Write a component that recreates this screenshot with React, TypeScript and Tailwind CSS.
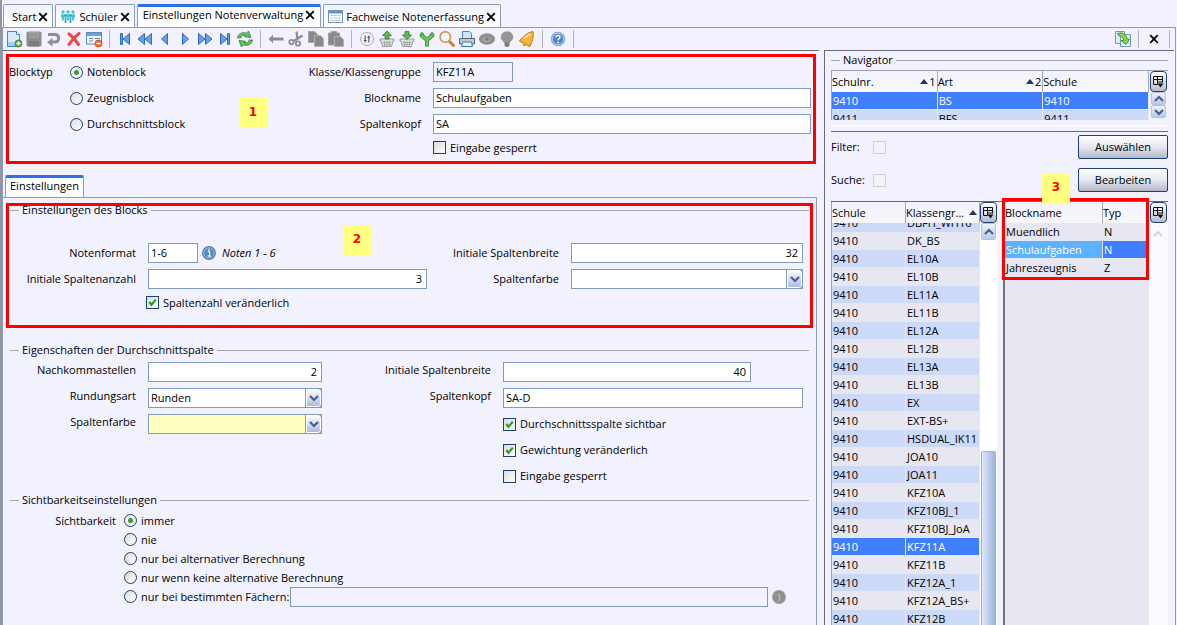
import React, { useState } from 'react';

type IconProps = { children: React.ReactNode; size?: number };

const Svg: React.FC<IconProps> = ({ children, size = 18 }) => (
  <svg width={size} height={size} viewBox="0 0 18 18" fill="none" className="shrink-0">
    {children}
  </svg>
);

/* ---------- Toolbar icons ---------- */

const NewIcon = () => (
  <Svg>
    <path d="M2.5 1.5h9l3 3v12h-12z" fill="#d9ebfb" stroke="#4d86bd" />
    <path d="M3 12h11v4H3z" fill="#9fd0f7" />
    <path d="M11.5 1.5v3h3" fill="#fff" stroke="#4d86bd" />
    <circle cx="13.5" cy="13.5" r="3.5" fill="#6aa84a" stroke="#3f7a2c" strokeWidth=".8" />
    <path d="M13.5 11.5v4M11.5 13.5h4" stroke="#fff" strokeWidth="1.4" />
  </Svg>
);

const SaveIcon = () => (
  <Svg>
    <path d="M1.5 3q0-1.500 1.500-1.500h12q1.500 0 1.500 1.500v12q0 1.500-1.500 1.500h-12q-1.500 0-1.500-1.500z" fill="#8c8c8c" />
    <path d="M4 2h10v6H4z" fill="#a3a3a3" />
    <path d="M4 11h10v5.500H4z" fill="#7c7c7c" />
    <path d="M5 4h8M5 6h8" stroke="#8c8c8c" />
  </Svg>
);

const UndoIcon = () => (
  <Svg>
    <path d="M3 4.500h7.500a3.800 3.800 0 0 1 0 7.500H7" stroke="#8f8f8f" strokeWidth="3" />
    <path d="M7.500 8v8.500L2 12.200z" fill="#8f8f8f" />
  </Svg>
);

const DeleteIcon = () => (
  <Svg>
    <path d="M4 4c3.500 2.500 6.500 6 9.500 10.500M14 3.500c-4 3-7.500 7-10 11" stroke="#ee4a49" strokeWidth="3.200" strokeLinecap="round" />
  </Svg>
);

const FormIcon = () => (
  <Svg>
    <rect x="1.500" y="2.500" width="15" height="11.500" fill="#f4f9ff" stroke="#5b8cc0" />
    <path d="M2 3h14v3H2z" fill="#6fa3d8" />
    <path d="M4 8.500h4M4 11h4M10 8.500h5" stroke="#5b8cc0" />
    <circle cx="13.500" cy="13.500" r="3.500" fill="#e8752d" stroke="#b9501a" strokeWidth=".8" />
    <path d="M11.500 13.500h4" stroke="#fff" strokeWidth="1.400" />
  </Svg>
);

const blue = { fill: '#6a9fe6', stroke: '#2f6cc0', strokeWidth: 1 };

const FirstIcon = () => (
  <Svg><path d="M4.500 3.500h2v11h-2zM13.500 3.500v11L7 9z" {...blue} /></Svg>
);
const RewindIcon = () => (
  <Svg><path d="M8.500 3.500v11L2 9zM15.500 3.500v11L9 9z" {...blue} /></Svg>
);
const PrevIcon = () => (
  <Svg><path d="M11.500 3.500v11L5.500 9z" {...blue} /></Svg>
);
const NextIcon = () => (
  <Svg><path d="M6.500 3.500v11L12.500 9z" {...blue} /></Svg>
);
const ForwardIcon = () => (
  <Svg><path d="M2.500 3.500v11L9 9zM9.500 3.500v11L16 9z" {...blue} /></Svg>
);
const LastIcon = () => (
  <Svg><path d="M11.500 3.500h2v11h-2zM4.500 3.500v11L11 9z" {...blue} /></Svg>
);

const RefreshIcon = () => (
  <Svg>
    <path d="M1.500 8C2 4 6 1.500 10.500 3.200L12.500 1l2.500 6.500-6.500-.8 1.500-1.300C7 4.800 5 5.800 4.800 8z" fill="#6dbb62" stroke="#2f7d3a" strokeWidth=".8" />
    <path d="M16.500 10C16 14 12 16.500 7.500 14.800L5.500 17 3 10.500l6.500.8L8 12.600c3 .6 5-.4 5.200-2.600z" fill="#6dbb62" stroke="#2f7d3a" strokeWidth=".8" />
  </Svg>
);

const BackIcon = () => (
  <Svg><path d="M1.500 9 6 4.800v2.700h10.500v3H6v2.700z" fill="#8d8d8d" /></Svg>
);

const CutIcon = () => (
  <Svg>
    <path d="M9.500 1.500 10.500 10M15.500 5.500 6 11.500" stroke="#8d8d8d" strokeWidth="2.200" />
    <circle cx="4.500" cy="12" r="2.200" stroke="#8d8d8d" strokeWidth="1.800" />
    <circle cx="11" cy="13.500" r="2.200" stroke="#8d8d8d" strokeWidth="1.800" />
  </Svg>
);

const CopyIcon = () => (
  <Svg>
    <path d="M1.500 1.500h6l3 3v8h-9z" fill="#8a8a8a" stroke="#a5a5a5" />
    <path d="M7.500 5.500h6l3 3v8h-9z" fill="#8a8a8a" stroke="#b5b5b5" />
  </Svg>
);

const PasteIcon = () => (
  <Svg>
    <path d="M1.500 3h3V1.500h5V3h3v12h-11z" fill="#8a8a8a" stroke="#9f9f9f" />
    <path d="M7.500 6.500h6l3 3v7h-9z" fill="#8a8a8a" stroke="#b5b5b5" />
  </Svg>
);

const SettingsIcon = () => (
  <Svg>
    <circle cx="9" cy="9" r="6.500" fill="#f5f5f5" stroke="#a9a9a9" />
    <path d="M7.200 5.500v7M5.700 10.500h3M10.800 5.500v7M9.300 7.500h3" stroke="#5d5d5d" strokeWidth="1.200" />
  </Svg>
);

const Basket: React.FC<{ up?: boolean }> = ({ up }) => (
  <Svg>
    <path d="M2 9h14v2h-1l-1.500 5.500h-9L3 11H2z" fill="#dedede" stroke="#8a8a8a" strokeWidth=".8" />
    <path d="M5 12.500h8M5.500 14.500h7M6.500 11v5M9 11v5M11.500 11v5" stroke="#999" strokeWidth=".7" />
    <path
      d={up ? 'M9 1 13.500 5.500H11V9H7V5.500H4.500z' : 'M9 9.500 4.500 5H7V1.500h4V5h2.500z'}
      fill="#5db84e"
      stroke="#2c7a2b"
      strokeWidth=".8"
    />
  </Svg>
);

const MergeIcon = () => (
  <Svg>
    <path d="M4 3.500v2.200L8 9h2l4-3.300V3.500M9 9v7.500" stroke="#318235" strokeWidth="4" />
    <path d="M4 4v1.700L8 9h2l4-3.300V4M9 9v7" stroke="#70c665" strokeWidth="2.600" />
    <path d="M1 5.500 4 1.500l3 4zM11 5.500l3-4 3 4z" fill="#4da94b" />
  </Svg>
);

const SearchIcon = () => (
  <Svg>
    <path d="m11 11 4.500 4.500" stroke="#c9822f" strokeWidth="3" strokeLinecap="round" />
    <circle cx="7.300" cy="7" r="5.300" fill="#eef5fb" stroke="#d28c49" strokeWidth="1.500" />
  </Svg>
);

const PrintIcon = () => (
  <Svg>
    <path d="M4.500 1.500h7l2 2V9h-9z" fill="#cfe3f8" stroke="#4f83bb" />
    <path d="M1.500 8.500h15V14h-15z" fill="#c3c6cc" stroke="#5c6675" />
    <path d="M4.500 12h9l1 4.500h-11z" fill="#e9f3fd" stroke="#3d78b8" />
  </Svg>
);

const EyeIcon = () => (
  <Svg>
    <ellipse cx="9" cy="9" rx="8" ry="5.800" fill="#8e8e8e" />
    <ellipse cx="9" cy="9.500" rx="4.500" ry="3" fill="#a2a2a2" />
    <circle cx="9" cy="9" r="1.800" fill="#7d7d7d" />
  </Svg>
);

const BulbIcon = () => (
  <Svg>
    <path d="M9 1.200A6.300 6.300 0 0 1 15.300 7.500c0 2.200-2.500 3.500-3.300 5H6c-.8-1.500-3.300-2.800-3.300-5A6.300 6.300 0 0 1 9 1.200z" fill="#969696" />
    <path d="M6.500 12h5v3.500l-1.500 1.500H8l-1.500-1.500z" fill="#7f7f7f" />
  </Svg>
);

const BellIcon = () => (
  <Svg>
    <path d="M15 1.500c-5 .8-8.500 4-12 7.500l-1.500 2L12 16.500c1.800-4.500 4-9 3-15z" fill="#f3b73e" stroke="#bd7a18" />
    <path d="M1.500 10.800 12 16.300" stroke="#d9952b" strokeWidth="1.500" />
    <circle cx="6.500" cy="14.500" r="1.800" fill="#e19a2a" />
    <path d="M6 8.500c2-2 4-3.500 6.500-4.500" stroke="#fbe2a0" strokeWidth="1.400" />
  </Svg>
);

const HelpIcon = () => (
  <Svg>
    <circle cx="9" cy="9" r="6.800" fill="#4f86c9" stroke="#8fa9cc" />
    <circle cx="9" cy="9" r="5.700" stroke="#d5e3f5" strokeWidth=".8" />
    <path d="M7 7.300c0-2.600 4.200-2.500 4 0-.1 1.500-2 1.500-2 3" stroke="#fff" strokeWidth="1.400" />
    <circle cx="9" cy="12.400" r=".9" fill="#fff" />
  </Svg>
);

const ExportIcon = () => (
  <Svg>
    <path d="M1.500 1.500h9v12h-9z" fill="#d9eaf9" stroke="#6d9bc6" />
    <path d="M6.500 4.500h10v12h-10z" fill="#e8f3fd" stroke="#6d9bc6" />
    <path d="M3.500 3.500C8 2 12.500 4 13 9h2.500L12 14.500 7 10.500h2.500C9.500 8 7.500 6 5 6z" fill="#8bd443" stroke="#468c22" strokeWidth=".9" />
  </Svg>
);

const PeopleIcon = () => (
  <svg width="16" height="14" viewBox="0 0 16 14" fill="#4cc4d8" className="mr-px shrink-0">
    {[3, 8, 13].map((x) => (
      <g key={x}>
        <circle cx={x} cy="2" r="1.700" />
        <path d={`M${x - 2} 4.200h4v3.300h-1v3h-2v-3h-1z`} />
      </g>
    ))}
    <circle cx="5.500" cy="5.500" r="1.200" fill="#2b9fc4" />
    <circle cx="10.500" cy="5.500" r="1.200" fill="#2b9fc4" />
    <path d="M4.700 7.500h1.600V13H4.700zM9.700 7.500h1.600V13H9.700z" fill="#2b9fc4" />
  </svg>
);

const GridIcon = () => (
  <svg width="15" height="13" viewBox="0 0 15 13" fill="none" className="mr-px shrink-0">
    <rect x=".5" y=".5" width="14" height="12" fill="#fff" stroke="#7295bd" />
    <path d="M1 1h13v2.500H1z" fill="#5f92cc" />
    <path d="M2.500 5.500h10M2.500 8h10M2.500 10.500h10" stroke="#a9bdd4" strokeDasharray="2.700 1" />
  </svg>
);

const CrossIcon: React.FC<{ size?: number }> = ({ size = 10 }) => (
  <svg width={size} height={size} viewBox="0 0 10 10" className="shrink-0">
    <path d="M1.200 1.200l7.600 7.600M8.800 1.200 1.200 8.800" stroke="#000" strokeWidth="1.900" />
  </svg>
);

const InfoIcon: React.FC<{ muted?: boolean }> = ({ muted }) => (
  <svg width="14" height="14" viewBox="0 0 14 14" className="shrink-0">
    <circle cx="7" cy="7" r="6.300" fill={muted ? '#8f8f8f' : '#5189c8'} stroke={muted ? '#999' : '#5a7ca6'} strokeWidth="1.200" />
    {!muted && <circle cx="7" cy="7" r="5.200" fill="none" stroke="#a9c5e6" strokeWidth=".8" />}
    <path d="M5.800 6H7.700v4M5.600 10.200h3.200" stroke={muted ? '#b5b5b5' : '#fff'} strokeWidth="1.300" fill="none" />
    <circle cx="7.100" cy="3.900" r=".9" fill={muted ? '#b5b5b5' : '#fff'} />
  </svg>
);

const Chevron: React.FC<{ up?: boolean; color?: string }> = ({ up, color = '#44618c' }) => (
  <svg width="10" height="8" viewBox="0 0 10 8" fill="none" className="shrink-0">
    <path d={up ? 'M1 6l4-4 4 4' : 'M1 2l4 4 4-4'} stroke={color} strokeWidth="2.200" />
  </svg>
);

const SortUp = () => (
  <svg width="8" height="5" viewBox="0 0 8 5" className="shrink-0">
    <path d="M4 0l4 5H0z" fill="#1f3a55" />
  </svg>
);

/* ---------- Form controls ---------- */

const Radio: React.FC<{ name: string; label: string; checked?: boolean }> = ({ name, label, checked }) => (
  <label className="flex items-center gap-1 whitespace-nowrap">
    <input
      type="radio"
      name={name}
      defaultChecked={checked}
      className="size-[13px] shrink-0 appearance-none rounded-full border border-[#1c3f75] bg-linear-to-br from-[#dedede] to-white checked:bg-[radial-gradient(circle,#33a033_0_2px,#f4f4f4_3px)]"
    />
    {label}
  </label>
);

const Check: React.FC<{ label: string; checked?: boolean }> = ({ label, checked }) => (
  <label className="flex items-center gap-1 whitespace-nowrap">
    <span className="relative flex">
      <input
        type="checkbox"
        defaultChecked={checked}
        className="peer size-[13px] appearance-none border border-[#1c3f75] bg-linear-to-br from-[#dcdcdc] to-white"
      />
      <svg viewBox="0 0 13 13" className="pointer-events-none absolute inset-0 hidden size-[13px] peer-checked:block" fill="none">
        <path d="M3.300 6l2.200 2.800L9.800 3.600" stroke="#21a121" strokeWidth="2.200" />
      </svg>
    </span>
    {label}
  </label>
);

type FieldProps = { id: string; value?: string; className?: string };

const Field: React.FC<FieldProps> = ({ id, value = '', className = '' }) => (
  <input
    id={id}
    type="text"
    defaultValue={value}
    className={`h-5 min-w-0 border border-[#7f9bbd] pb-[2px] pl-[2px] pr-1 outline-none ${className}`}
  />
);

const Select: React.FC<FieldProps> = ({ id, value = '', className = '' }) => (
  <div className={`relative flex h-5 ${className}`}>
    <select id={id} className="w-full appearance-none border border-[#7f9bbd] bg-inherit pb-px pl-[2px] outline-none">
      <option>{value}</option>
    </select>
    <span className="pointer-events-none absolute inset-y-0 right-0 flex w-[17px] items-center justify-center rounded-r-sm border border-[#7f9bbd] bg-linear-to-b from-white to-[#a9b8dc] shadow-[inset_0_0_0_1px_#fff]">
      <Chevron />
    </span>
  </div>
);

const Group: React.FC<{ title: string; children: React.ReactNode }> = ({ title, children }) => (
  <section>
    <h2 className="flex h-[18px] items-center gap-[3px] whitespace-nowrap before:h-px before:w-[9px] before:bg-[#a5a5ad] after:h-px after:flex-1 after:bg-[#a5a5ad]">
      {title}
    </h2>
    {children}
  </section>
);

const Marker: React.FC<{ n: number; className: string }> = ({ n, className }) => (
  <span
    className={`absolute z-20 flex h-[30px] w-7 items-center justify-center bg-[#ffff80] pb-[2px] font-['DejaVu_Sans',sans-serif] text-xs font-bold text-[#f00] ${className}`}
  >
    {n}
  </span>
);

const ColumnButton = () => (
  <button
    type="button"
    aria-label="Spalten"
    className="flex h-[21px] w-[17px] shrink-0 items-center justify-center rounded-sm border border-[#1c3f75] bg-linear-to-b from-white to-[#b9bccb]"
  >
    <svg width="11" height="12" viewBox="0 0 11 12" fill="none">
      <path d="M.5 8.500v-8h9v6M.5 3.500h9M4.500.5v8H.5M4.500 6h5" stroke="#111" />
      <path d="M4.500 7.500h6l-3 4z" fill="#111" />
    </svg>
  </button>
);

const ScrollButton: React.FC<{ up?: boolean; className?: string }> = ({ up, className = 'h-[13px]' }) => (
  <button
    type="button"
    aria-label={up ? 'Nach oben' : 'Nach unten'}
    className={`flex w-[15px] items-center justify-center rounded-xs border border-[#b4c2dd] bg-linear-to-b from-[#eef2fc] to-[#b9c9ea] ${className}`}
  >
    <Chevron up={up} />
  </button>
);

/* ---------- Toolbar ---------- */

const TOOL_GROUPS = [
  [
    { name: 'Neu', icon: <NewIcon /> },
    { name: 'Speichern', icon: <SaveIcon /> },
    { name: 'Rückgängig', icon: <UndoIcon /> },
    { name: 'Löschen', icon: <DeleteIcon /> },
    { name: 'Formular', icon: <FormIcon /> },
  ],
  [
    { name: 'Erster', icon: <FirstIcon /> },
    { name: 'Schnell zurück', icon: <RewindIcon /> },
    { name: 'Zurück', icon: <PrevIcon /> },
    { name: 'Weiter', icon: <NextIcon /> },
    { name: 'Schnell vor', icon: <ForwardIcon /> },
    { name: 'Letzter', icon: <LastIcon /> },
    { name: 'Aktualisieren', icon: <RefreshIcon /> },
  ],
  [
    { name: 'Vorheriges', icon: <BackIcon /> },
    { name: 'Ausschneiden', icon: <CutIcon /> },
    { name: 'Kopieren', icon: <CopyIcon /> },
    { name: 'Einfügen', icon: <PasteIcon /> },
  ],
  [
    { name: 'Optionen', icon: <SettingsIcon /> },
    { name: 'Auslagern', icon: <Basket up /> },
    { name: 'Einlagern', icon: <Basket /> },
    { name: 'Zusammenführen', icon: <MergeIcon /> },
    { name: 'Suchen', icon: <SearchIcon /> },
    { name: 'Drucken', icon: <PrintIcon /> },
    { name: 'Ansicht', icon: <EyeIcon /> },
    { name: 'Hinweis', icon: <BulbIcon /> },
    { name: 'Erinnerung', icon: <BellIcon /> },
  ],
  [{ name: 'Hilfe', icon: <HelpIcon /> }],
];

const Separator = () => <span className="mx-[5px] h-[18px] w-px bg-[#b3b3bb]" />;

const Toolbar = () => (
  <div className="flex h-[22px] items-center pl-px">
    {TOOL_GROUPS.map((group, i) => (
      <React.Fragment key={i}>
        {group.map((tool) => (
          <button key={tool.name} type="button" aria-label={tool.name} className="flex w-5 items-center justify-center">
            {tool.icon}
          </button>
        ))}
        <Separator />
      </React.Fragment>
    ))}
    <div className="ml-auto flex items-center">
      <button type="button" aria-label="Exportieren" className="flex w-5 items-center justify-center">
        <ExportIcon />
      </button>
      <Separator />
      <button type="button" aria-label="Schließen" className="flex w-5 items-center justify-center">
        <CrossIcon />
      </button>
      <Separator />
    </div>
  </div>
);

/* ---------- Tabs ---------- */

const TABS = [
  { title: 'Start', icon: null },
  { title: 'Schüler', icon: <PeopleIcon /> },
  { title: 'Einstellungen Notenverwaltung', icon: null },
  { title: 'Fachweise Notenerfassung', icon: <GridIcon /> },
];

const TabBar = () => {
  const [active, setActive] = useState(2);

  return (
    <nav className="flex h-[27px] items-end gap-[2px] pl-px">
      {TABS.map((tab, i) => (
        <button
          key={tab.title}
          type="button"
          onClick={() => setActive(i)}
          className={
            i === active
              ? 'flex h-[23px] items-center gap-[2px] rounded-t-xs border border-b-0 border-t-3 border-[#8c9db8] border-t-[#2f6fe0] bg-white px-[5px] pb-[5px]'
              : `flex h-[23px] items-center gap-[2px] rounded-t-xs border border-b-0 border-[#8c9db8] bg-linear-to-b from-[#f2f2ff] to-white pt-px ${tab.icon ? 'px-1' : 'pl-2 pr-1'}`
          }
        >
          {tab.icon}
          <span>{tab.title}</span>
          <CrossIcon />
        </button>
      ))}
    </nav>
  );
};

/* ---------- Block form ---------- */

const BlockForm = () => (
  <div className="relative mx-[3px] mt-[3px] flex border-3 border-[#f00] pb-[3px] pr-[2px] pt-[2px]">
    <span className="flex h-[26px] w-[61px] items-center">Blocktyp</span>
    <div className="w-[160px]">
      {['Notenblock', 'Zeugnisblock', 'Durchschnittsblock'].map((name, i) => (
        <div key={name} className="flex h-[26px] items-center">
          <Radio name="blocktyp" label={name} checked={i === 0} />
        </div>
      ))}
    </div>
    <div className="grid flex-1 grid-cols-[191px_1fr] grid-rows-[26px_26px_26px_21px] items-center gap-x-3">
      <label htmlFor="klasse" className="text-right">Klasse/Klassengruppe</label>
      <Field id="klasse" value="KFZ11A" className="w-20" />
      <label htmlFor="blockname" className="text-right">Blockname</label>
      <Field id="blockname" value="Schulaufgaben" className="bg-white" />
      <label htmlFor="kopf" className="text-right">Spaltenkopf</label>
      <Field id="kopf" value="SA" className="bg-white" />
      <div className="col-start-2">
        <Check label="Eingabe gesperrt" />
      </div>
    </div>
    <Marker n={1} className="left-[230px] top-[41px]" />
  </div>
);

const BlockSettings = () => (
  <Group title="Einstellungen des Blocks">
    <div className="flex pb-7 pr-[6px] pt-[21px]">
      <div className="w-[417px]">
        <div className="grid auto-rows-[26px] grid-cols-[126px_1fr] items-center gap-x-3">
          <label htmlFor="format" className="text-right">Notenformat</label>
          <div className="flex items-center gap-1">
            <Field id="format" value="1-6" className="w-[50px] bg-white" />
            <InfoIcon />
            <i className="ml-[2px]">Noten 1 - 6</i>
          </div>
          <label htmlFor="anzahl" className="text-right">Initiale Spaltenanzahl</label>
          <Field id="anzahl" value="3" className="bg-white text-right" />
        </div>
        <div className="flex h-[21px] items-center pl-[136px]">
          <Check label="Spaltenzahl veränderlich" checked />
        </div>
      </div>
      <div className="grid flex-1 auto-rows-[26px] grid-cols-[132px_1fr] items-center gap-x-3 self-start">
        <label htmlFor="breite" className="text-right">Initiale Spaltenbreite</label>
        <Field id="breite" value="32" className="bg-white text-right" />
        <label htmlFor="farbe" className="text-right">Spaltenfarbe</label>
        <Select id="farbe" className="bg-white" />
      </div>
    </div>
  </Group>
);

const AverageSettings = () => (
  <Group title="Eigenschaften der Durchschnittspalte">
    <div className="flex pb-[2px] pr-[6px]">
      <div className="grid w-[312px] auto-rows-[26px] grid-cols-[126px_1fr] items-center gap-x-3 self-start">
        <label htmlFor="stellen" className="pb-1 text-right">Nachkommastellen</label>
        <Field id="stellen" value="2" className="bg-white text-right" />
        <label htmlFor="rundung" className="pb-1 text-right">Rundungsart</label>
        <Select id="rundung" value="Runden" className="bg-white" />
        <label htmlFor="farbe2" className="pb-1 text-right">Spaltenfarbe</label>
        <Select id="farbe2" className="bg-[#ffffc0]" />
      </div>
      <div className="grid flex-1 auto-rows-[26px] grid-cols-[169px_1fr] items-center gap-x-3">
        <label htmlFor="breite2" className="pb-1 text-right">Initiale Spaltenbreite</label>
        <Field id="breite2" value="40" className="w-[248px] bg-white text-right" />
        <label htmlFor="kopf2" className="pb-1 text-right">Spaltenkopf</label>
        <Field id="kopf2" value="SA-D" className="bg-white" />
        <div className="col-start-2"><Check label="Durchschnittsspalte sichtbar" checked /></div>
        <div className="col-start-2"><Check label="Gewichtung veränderlich" checked /></div>
        <div className="col-start-2"><Check label="Eingabe gesperrt" /></div>
      </div>
    </div>
  </Group>
);

const VisibilitySettings = () => (
  <Group title="Sichtbarkeitseinstellungen">
    <div className="flex gap-2 pt-[2px]">
      <span className="w-[106px] text-right leading-[19px]">Sichtbarkeit</span>
      <div className="flex-1">
        {['immer', 'nie', 'nur bei alternativer Berechnung', 'nur wenn keine alternative Berechnung'].map((name, i) => (
          <div key={name} className="flex h-[19px] items-center">
            <Radio name="sichtbarkeit" label={name} checked={i === 0} />
          </div>
        ))}
        <div className="flex h-[19px] items-center pr-[23px]">
          <Radio name="sichtbarkeit" label="nur bei bestimmten Fächern:" />
          <input aria-label="Fächer" type="text" className="ml-px mr-1 h-5 min-w-0 flex-1 border border-[#7f9bbd] px-[3px]" />
          <InfoIcon muted />
        </div>
      </div>
    </div>
  </Group>
);

/* ---------- Navigator ---------- */

const CLASSES = [
  'DBFH_WH10', 'DK_BS', 'EL10A', 'EL10B', 'EL11A', 'EL11B', 'EL12A', 'EL12B', 'EL13A', 'EL13B', 'EX', 'EXT-BS+',
  'HSDUAL_IK11', 'JOA10', 'JOA11', 'KFZ10A', 'KFZ10BJ_1', 'KFZ10BJ_JoA', 'KFZ11A', 'KFZ11B', 'KFZ12A_1',
  'KFZ12A_BS+', 'KFZ12B',
];

const BLOCKS = [
  { name: 'Muendlich', type: 'N' },
  { name: 'Schulaufgaben', type: 'N' },
  { name: 'Jahreszeugnis', type: 'Z' },
];

const th = 'h-[21px] border-r border-[#a9a9b3] bg-linear-to-b from-[#f2f2ff] to-[#f8f8fb] p-0 text-left font-normal';
const td = 'h-[18px] overflow-hidden whitespace-nowrap border-b border-r border-[#e7e7f2] p-0 pl-px leading-[17px]';

const Table: React.FC<{ children: React.ReactNode }> = ({ children }) => (
  <div className="min-w-0 flex-1">
    <table className="w-full table-fixed border-separate border-spacing-0">{children}</table>
  </div>
);

const SchoolTable = () => (
  <div className="flex h-[50px] gap-px overflow-hidden border-l border-t border-[#a0a0a8] pr-px">
    <Table>
      <thead>
        <tr>
          <th className={th}><span className="flex items-center pr-px">Schulnr.<span className="ml-auto flex items-center gap-px"><SortUp />1</span></span></th>
          <th className={th}><span className="flex items-center pr-px">Art<span className="ml-auto flex items-center gap-px"><SortUp />2</span></span></th>
          <th className={th}>Schule</th>
        </tr>
      </thead>
      <tbody>
        <tr className="bg-[#3f7fff] text-white">
          <td className={td}>9410</td>
          <td className={td}>BS</td>
          <td className={td}>9410</td>
        </tr>
        <tr className="bg-[#ccd9f7]">
          <td className={td}>9411</td>
          <td className={td}>BFS</td>
          <td className={td}>9411</td>
        </tr>
      </tbody>
    </Table>
    <div className="flex flex-col items-center">
      <ColumnButton />
      <ScrollButton up />
      <ScrollButton />
    </div>
  </div>
);

const ClassTable = () => (
  <div className="flex w-[166px] shrink-0 overflow-hidden border-l border-[#a0a0a8]">
    <Table>
      <thead>
        <tr>
          <th className={th}>Schule</th>
          <th className={th}><span className="flex items-center justify-between pr-[2px]">Klassengr... <SortUp /></span></th>
        </tr>
      </thead>
      <tbody>
        {CLASSES.map((name, i) => {
          const color = name === 'KFZ11A' ? 'bg-[#3f7fff] text-white' : i % 2 === 0 ? 'bg-[#ccd9f7]' : 'bg-[#e7e7f2]';
          // top row is half scrolled out of view
          return i === 0 ? (
            <tr key={name} className={color}>
              <td className="h-[9px] p-0 pl-px"><div className="flex h-[9px] items-end overflow-hidden leading-[18px]">9410</div></td>
              <td className="h-[9px] p-0 pl-px"><div className="flex h-[9px] items-end overflow-hidden leading-[18px]">{name}</div></td>
            </tr>
          ) : (
            <tr key={name} className={color}>
              <td className={td}>9410</td>
              <td className={td}>{name}</td>
            </tr>
          );
        })}
      </tbody>
    </Table>
    <div className="flex flex-col items-center bg-white">
      <ColumnButton />
      <ScrollButton up className="h-[17px]" />
      <div className="mt-[211px] w-[15px] flex-1 rounded-t-xs border border-b-0 border-[#9db1d4] bg-linear-to-r from-[#dfe7fa] to-[#9fb3dd]" />
    </div>
  </div>
);

const BlockTable = () => (
  <div className="relative flex min-w-0 flex-1 border-l-2 border-[#73737b] bg-[#e7e7f2]">
    <Table>
      <colgroup>
        <col className="w-[98px]" />
        <col />
      </colgroup>
      <thead>
        <tr>
          <th className={th}>Blockname</th>
          <th className={th}>Typ</th>
        </tr>
      </thead>
      <tbody>
        {BLOCKS.map((b) => (
          <tr key={b.name} className={b.name === 'Schulaufgaben' ? 'bg-[#3f7fff] text-white' : ''}>
            <td className={`${td} ${b.name === 'Schulaufgaben' ? 'bg-[#5cb2ff]' : ''}`}>{b.name}</td>
            <td className={td}>{b.type}</td>
          </tr>
        ))}
      </tbody>
    </Table>
    <div className="flex w-[19px] flex-col items-center bg-[#fbfbff] pr-px">
      <ColumnButton />
      <span className="flex h-[21px] items-center"><Chevron up color="#d5d5d5" /></span>
    </div>
    <div className="pointer-events-none absolute -left-[3px] -top-1 z-10 h-[82px] w-[147px] border-3 border-[#f00]" />
    <Marker n={3} className="-top-[29px] left-[37px]" />
  </div>
);

const SearchRow: React.FC<{ label: string; action: string }> = ({ label, action }) => (
  <div className="flex h-6 items-center">
    <label htmlFor={label} className="w-[42px]">{label}:</label>
    <input id={label} type="checkbox" disabled className="size-[13px] appearance-none border border-[#cfcfcf] bg-[#f4f4f8]" />
    <button
      type="button"
      className="ml-auto h-6 w-[90px] rounded-xs border border-[#1c3f75] bg-linear-to-b from-white via-[#e6e7ef] to-[#b5b8c8]"
    >
      {action}
    </button>
  </div>
);

const Navigator = () => (
  <aside className="flex w-[350px] shrink-0 flex-col overflow-hidden border-l border-t border-[#6b6b75] px-[6px]">
    <Group title="Navigator">
      <div className="pt-px">
        <SchoolTable />
      </div>
    </Group>
    <div className="mt-[5px] h-px bg-white" />
    <div className="mt-[5px] flex flex-col gap-[9px] border-t border-[#6b6b75] pb-[9px] pt-[3px]">
      <SearchRow label="Filter" action="Auswählen" />
      <SearchRow label="Suche" action="Bearbeiten" />
    </div>
    <div className="flex min-h-0 flex-1 gap-[6px] border-t border-[#6b6b75]">
      <ClassTable />
      <BlockTable />
    </div>
  </aside>
);

const App: React.FC = () => (
  <div className="flex h-screen flex-col overflow-hidden border-l-2 border-[#94949e] bg-[#f2f2ff] font-['Open_Sans','Noto_Sans',sans-serif] text-[11px] leading-4 text-black">
    <TabBar />
    <div className="mr-px flex min-h-0 flex-1 flex-col border-l border-r border-t border-[#8c9db8]">
      <Toolbar />
      <div className="flex min-h-0 flex-1 gap-[5px] pr-px">
        <main className="flex min-w-0 flex-1 flex-col border-t border-[#6b6b75]">
          <BlockForm />
          <div className="mt-[11px] flex pl-[2px]">
            <button type="button" className="h-[22px] rounded-t-xs border border-b-0 border-t-3 border-[#8c9db8] border-t-[#2f6fe0] bg-white px-1 pb-[3px]">
              Einstellungen
            </button>
          </div>
          <div className="relative mr-[2px] flex-1 border-r border-t border-[#8c9db8] pl-[7px] pr-[7px] pt-[3px]">
            <BlockSettings />
            <AverageSettings />
            <VisibilitySettings />
            <div className="pointer-events-none absolute inset-x-[3px] top-[5px] h-[125px] border-3 border-[#f00]" />
            <Marker n={2} className="left-[340px] top-[27px]" />
          </div>
        </main>
        <Navigator />
      </div>
    </div>
  </div>
);

export default App;
